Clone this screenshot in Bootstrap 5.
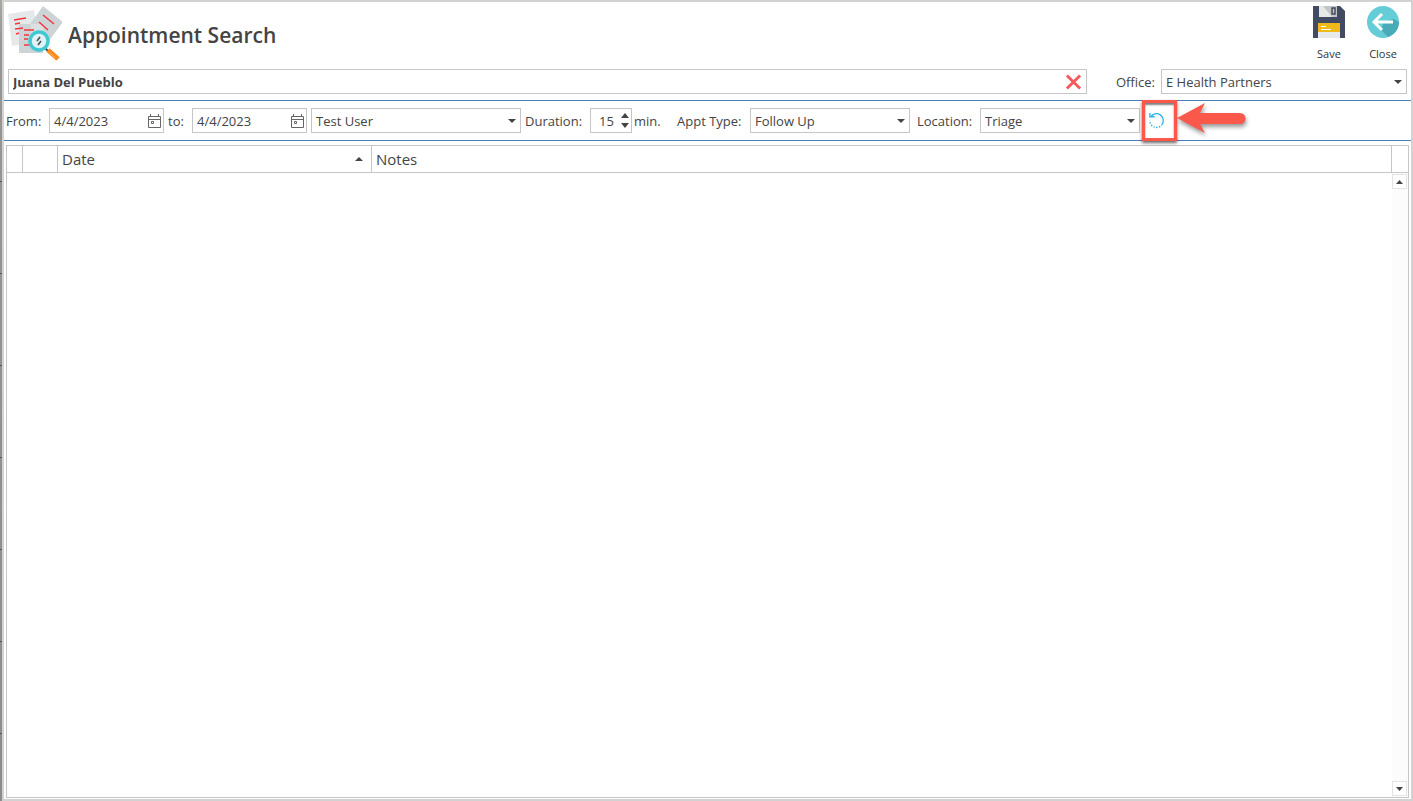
<!DOCTYPE html>
<html lang="en">
<head>
<meta charset="utf-8">
<meta name="viewport" content="width=device-width, initial-scale=1">
<title>Appointment Search</title>
<link href="https://cdn.jsdelivr.net/npm/bootstrap@5.3.0/dist/css/bootstrap.min.css" rel="stylesheet">
<style>
body{font-family:"Open Sans","Noto Sans",sans-serif;font-size:13px;line-height:20px;color:#444;background:#fff}
.backdrop{width:2px;background:repeating-linear-gradient(transparent 0 89px,#555 89px 90px,transparent 90px 92px) 0 92px no-repeat,linear-gradient(#a8a8a2,#969696 40px,#8c8c8c)}
.frame{border:2px solid #d2d2d2;min-width:0}
h1{font-size:21px;line-height:28px;font-weight:600}
.app-head{height:67px;padding-right:1px}
.title{margin:19px 0 0 6px}
.logo{width:54px;height:56px}
.tool{width:54px;font-size:11px;line-height:16px;color:#333;background:none;border:0;padding:3px 0 0}
.tool svg{width:34px;height:34px}
.tool span{padding-top:7px}
.patient-row{padding:0 4px 6px}
.office-label{padding:0 6px 0 29px}
.field,.form-control.field,.form-select.field{height:25px;border:1px solid #c6c6c6;border-radius:0;font-size:13px;line-height:20px;color:#444;padding:0 4px;background-color:#fff}
.form-select.field{background-image:url("data:image/svg+xml,%3Csvg xmlns='http://www.w3.org/2000/svg' viewBox='0 0 8 4'%3E%3Cpath fill='%23444' d='M0 0h8L4 4z'/%3E%3C/svg%3E");background-size:8px 4px;background-position:right 4px center}
.bare{border:0;background:none;padding:0;color:inherit;min-width:0;outline-offset:-1px}
.office{width:246px}
.filters{height:41px;border-top:1px solid #4a7ebb;border-bottom:1px solid #4a7ebb;padding-left:2px}
.filters label,.filters .unit{white-space:nowrap;flex:none}
.filters .field{flex:none}
.w-from{width:43px}.w-to{width:28px;padding-left:4px}.field.w-date{width:115px;padding-right:2px}.w-user{width:210px;margin-left:4px}
.w-dur{width:69px;padding-left:4px}.w-spin{width:42px}.w-unit{width:45px;padding-left:2px}.w-type{width:73px}
.w-combo{width:160px}.w-loc{width:70px;padding-left:7px}
.steps{display:grid;gap:5px}
.steps button,.steps svg{display:block;height:5px;line-height:0}
.refresh{width:35px;height:41px;margin-left:2px;padding-right:6px}
.callout-box{position:absolute;inset:0;border:3px solid #f9584b;box-shadow:0 2px 3px rgba(0,0,0,.6),inset 0 2px 2px rgba(0,0,0,.5);pointer-events:none}
.callout-arrow{position:absolute;left:34px;top:0;width:76px;height:40px;pointer-events:none;filter:drop-shadow(1px 3px 2px rgba(0,0,0,.4))}
.grid-panel{border:1px solid #c6c6c6;margin:4px 2px 1px 2px}
.grid-head{table-layout:fixed;width:100%;border-collapse:separate;border-spacing:0}
.grid-head th{height:27px;border-bottom:1px solid #c6c6c6;border-right:1px solid #c6c6c6;font-size:15px;line-height:20px;font-weight:400;padding:2px 4px}
.grid-head th:last-child{border-right:0}
.scroller{width:16px;background:#fcfcfc;padding:1px 1px 1px 0}
.scroller button{width:15px;height:15px;border:1px solid #e4e4e4;background:#fff;padding:0;line-height:0}
</style>
</head>
<body>
<div class="d-flex vh-100">
<div class="backdrop flex-shrink-0"></div>
<main class="frame flex-grow-1 d-flex flex-column">
<header class="app-head d-flex align-items-start ps-1 flex-shrink-0">
<svg class="logo mt-1" viewBox="0 0 54 56" aria-hidden="true">
<path fill="#e6e9ea" d="M0 8 26 4l5 31-27 5z"/><path fill="#cdd4d5" d="m35 0 20 16-20 27-20-15z"/>
<path fill="#cdd4d5" d="M11 18h24v29H11z"/><path fill="#dce0e1" d="M23 18h12v11H23z"/>
<path stroke="#f5333f" stroke-width="1.5" fill="none" d="m6 14 12-2M7 18l5-1M7 23l8-1M8 28l3-1M35 9l11 9M31 16l9 8M16 24h10M16 29h5M16 33h4M16 39h6"/>
<path stroke="#3b4358" stroke-width="2" d="m37 42 4 4"/><path stroke="#fb8c22" stroke-width="5" d="m40 44 10 9"/><path stroke="#fcb35c" stroke-width="1" d="m42 47 5 5"/>
<circle cx="31" cy="35" r="9" fill="#e0f2f5" stroke="#40c9d3" stroke-width="3.5"/><path stroke="#455" stroke-width="1.6" d="m29 35 3-4M30 39l3-4"/>
</svg>
<h1 class="title">Appointment Search</h1>
<div class="ms-auto d-flex">
<button class="tool" type="button"><svg class="d-block mx-auto" viewBox="0 0 34 34"><path fill="#434b63" d="M1 1h27l5 5v27H1z"/><path fill="#c4c6c6" d="M7 1h18v11H7z"/><path fill="#e6e8e8" d="M7 1h4l9 11H7z"/><path fill="none" stroke="#434b63" stroke-width="1.5" d="M20 3h3v6h-3z"/><path fill="#f0b91a" d="M6 18h22v9H6z"/><path fill="#e6eaea" d="M6 27h22v6H6z"/><path stroke="#fff" d="M9 21.500h5M9 24.500h10"/></svg><span class="d-block">Save</span></button>
<button class="tool" type="button"><svg class="d-block mx-auto" viewBox="0 0 34 34"><circle cx="17" cy="17" r="16" fill="#65cdd7"/><path fill="#48abb7" d="m15 25 7 7c6-2 11-8 11-15l-5-3-10 3z"/><path fill="none" stroke="#fff" stroke-width="3" d="M27 17H10M16 9l-8 8 8 8"/></svg><span class="d-block">Close</span></button>
</div>
</header>
<section class="patient-row d-flex align-items-center">
<div class="field d-flex align-items-center flex-grow-1"><input class="bare flex-grow-1 fw-bold" aria-label="Patient" value="Juana Del Pueblo"><button class="bare d-flex" type="button" aria-label="Clear patient"><svg width="17" height="18" viewBox="0 0 18 18"><path stroke="#f9585b" stroke-width="3" d="m2 2 14 14M16 2 2 16"/></svg></button></div>
<label class="office-label" for="office">Office:</label><select id="office" class="form-select field office"><option>E Health Partners</option></select>
</section>
<form class="filters d-flex align-items-center flex-shrink-0">
<label class="w-from" for="from">From:</label>
<div class="field w-date d-flex align-items-center"><input id="from" class="bare flex-grow-1" size="8" value="4/4/2023"><button class="bare d-flex" type="button" aria-label="Choose start date"><svg width="13" height="14" viewBox="0 0 13 14"><path fill="none" stroke="#666" d="M.5 2.500h12v11H.5zM.5 5.500h12M2.500 0v3M10.500 0v3M3.500 7.500h2v2h-2z"/></svg></button></div>
<label class="w-to" for="to">to:</label>
<div class="field w-date d-flex align-items-center"><input id="to" class="bare flex-grow-1" size="8" value="4/4/2023"><button class="bare d-flex" type="button" aria-label="Choose end date"><svg width="13" height="14" viewBox="0 0 13 14"><path fill="none" stroke="#666" d="M.5 2.500h12v11H.5zM.5 5.500h12M2.500 0v3M10.500 0v3M3.500 7.500h2v2h-2z"/></svg></button></div>
<select class="form-select field w-user" aria-label="User"><option>Test User</option></select>
<label class="w-dur" for="dur">Duration:</label>
<div class="field w-spin d-flex align-items-center"><input id="dur" class="bare flex-grow-1 ps-1" size="2" value="15"><div class="steps"><button class="bare" type="button" aria-label="More"><svg width="8" height="5"><path fill="#444" d="M0 5h8L4 0z"/></svg></button><button class="bare" type="button" aria-label="Less"><svg width="8" height="5"><path fill="#444" d="M0 0h8L4 5z"/></svg></button></div></div>
<span class="unit w-unit">min.</span>
<label class="w-type" for="type">Appt Type:</label><select id="type" class="form-select field w-combo"><option>Follow Up</option></select>
<label class="w-loc" for="loc">Location:</label><select id="loc" class="form-select field w-combo"><option>Triage</option></select>
<div class="refresh position-relative flex-shrink-0 d-flex justify-content-center align-items-center"><button class="bare d-flex" type="button" aria-label="Refresh"><svg width="17" height="17" viewBox="0 0 18 18"><path fill="none" stroke="#2bb3ea" stroke-width="1.400" d="M3 5a7 7 0 0 1 12 8"/><path fill="none" stroke="#2bb3ea" stroke-width="1.400" stroke-dasharray="1.500 1.500" d="M15 13A7 7 0 0 1 2 9"/><path fill="none" stroke="#2bb3ea" stroke-width="1.400" d="M2 1v4h5"/></svg></button>
<div class="callout-box"></div>
<svg class="callout-arrow" viewBox="0 0 76 40"><path fill="#f9584b" d="m1 18 28-15-5 10h40a5 5 0 0 1 0 11H24l5 9z"/></svg></div>
</form>
<section class="grid-panel flex-grow-1 d-flex flex-column">
<table class="grid-head"><colgroup><col style="width:16px"><col style="width:35px"><col style="width:314px"><col><col style="width:16px"></colgroup>
<thead><tr><th></th><th></th><th><div class="d-flex align-items-center justify-content-between">Date<svg class="me-1" width="8" height="4"><path fill="#444" d="M0 4h8L4 0z"/></svg></div></th><th>Notes</th><th></th></tr></thead></table>
<div class="flex-grow-1 d-flex justify-content-end"><div class="scroller d-flex flex-column justify-content-between"><button type="button" aria-label="Scroll up"><svg width="7" height="4"><path fill="#444" d="M0 4h7L3.500 0z"/></svg></button><button type="button" aria-label="Scroll down"><svg width="7" height="4"><path fill="#444" d="M0 0h7L3.500 4z"/></svg></button></div></div>
</section>
</main>
</div>
<script src="https://cdn.jsdelivr.net/npm/bootstrap@5.3.0/dist/js/bootstrap.bundle.min.js"></script>
</body>
</html>
